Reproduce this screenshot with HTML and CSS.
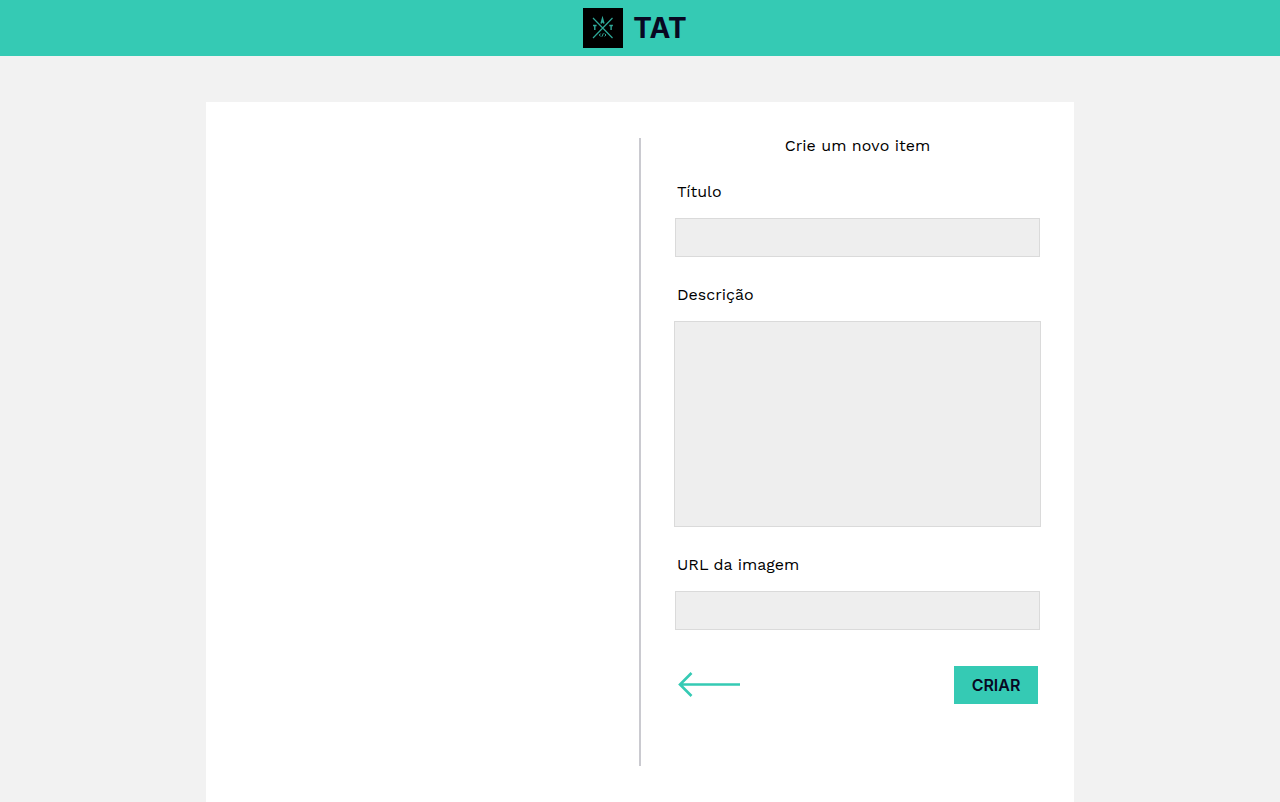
FILE: index.html
```html
<!DOCTYPE html>
<html lang="pt-BR">
<head>
<meta charset="utf-8">
<meta name="viewport" content="width=device-width, initial-scale=1">
<title>TAT</title>
<link rel="stylesheet" href="styles.css">
</head>
<body>
<header class="header">
  <svg class="logo" viewBox="0 0 40 40" aria-hidden="true">
    <rect width="40" height="40" fill="#000"/>
    <g fill="none" stroke="#2fa999" stroke-width="1">
      <path d="M10 10 29.500 30M29.500 10 10 30" stroke-width="1.200"/>
      <path d="M18.100 15.500 19.500 10.500 20.900 15.500M18.600 14H20.600" stroke-width="1.500"/>
      <path d="M10 17.500H13.600M11.800 17.500V22M26.300 17.500H29.900M28.100 17.500V22" stroke-width="1.400"/>
      <path d="M17.600 25.600 16.300 27 17.600 28.400M20.400 25.300 18.900 28.700M21.700 25.600 23 27 21.700 28.400" stroke-width="1"/>
    </g>
  </svg>
  <h1 class="brand">TAT</h1>
</header>
<main class="card">
  <section class="preview" aria-label="Item"></section>
  <div class="divider"></div>
  <form class="form">
    <h2 class="form-title">Crie um novo item</h2>
    <label class="label" for="title">Título</label>
    <input class="field" id="title" type="text">
    <label class="label" for="description">Descrição</label>
    <textarea class="field field-area" id="description"></textarea>
    <label class="label" for="image">URL da imagem</label>
    <input class="field" id="image" type="text">
    <div class="actions">
      <a class="back" href="#" aria-label="Voltar">
        <svg class="arrow" viewBox="0 0 64 28" aria-hidden="true">
          <path d="M3 13.500H63M14.500 2 3 13.500 14.500 25" fill="none" stroke="#35cab4" stroke-width="2.600"/>
        </svg>
      </a>
      <button class="create" type="submit">CRIAR</button>
    </div>
  </form>
</main>
</body>
</html>
```
FILE: styles.css
```css
* {
  box-sizing: border-box;
}

body {
  display: flex;
  flex-direction: column;
  min-height: 100vh;
  margin: 0;
  background: #f2f2f2;
  color: #000;
  font: 16px/20px "Work Sans", Inter, sans-serif;
}

.header {
  display: flex;
  align-items: center;
  justify-content: center;
  gap: 10px;
  height: 56px;
  padding-right: 10px;
  background: #35cab4;
}

.logo {
  width: 40px;
  height: 40px;
}

.brand {
  margin: 0;
  color: #080822;
  font-family: Inter, sans-serif;
  font-size: 28px;
  line-height: 40px;
  font-weight: 700;
}

.card {
  display: grid;
  grid-template-columns: 1fr 2px 1fr;
  align-items: start;
  flex: 1;
  width: calc(100% - 32px);
  max-width: 868px;
  margin: 46px auto 0;
  padding: 36px 0;
  background: #fff;
}

.divider {
  align-self: stretch;
  background: #cacad0;
}

.form {
  display: flex;
  flex-direction: column;
  padding: 0 33px 62px;
}

.form-title {
  margin: 0 0 28px;
  font-size: 16px;
  line-height: 16px;
  font-weight: 400;
  text-align: center;
}

.label {
  margin: 0 3px 16px;
}

.field {
  height: 39px;
  margin: 0 1px 28px;
  padding: 8px;
  border: 1px solid #dadada;
  border-radius: 0;
  background: #eee;
  font: inherit;
}

.field-area {
  height: 206px;
  margin: 0 0 28px;
  resize: none;
}

.actions {
  display: flex;
  align-items: center;
  justify-content: space-between;
  margin: 8px 3px 0;
}

.arrow {
  display: block;
  width: 64px;
  height: 28px;
}

.create {
  height: 38px;
  width: 84px;
  padding: 0;
  border: 0;
  background: #35cab4;
  color: #080822;
  font: inherit;
  font-family: Inter, sans-serif;
  font-weight: 600;
}
```
